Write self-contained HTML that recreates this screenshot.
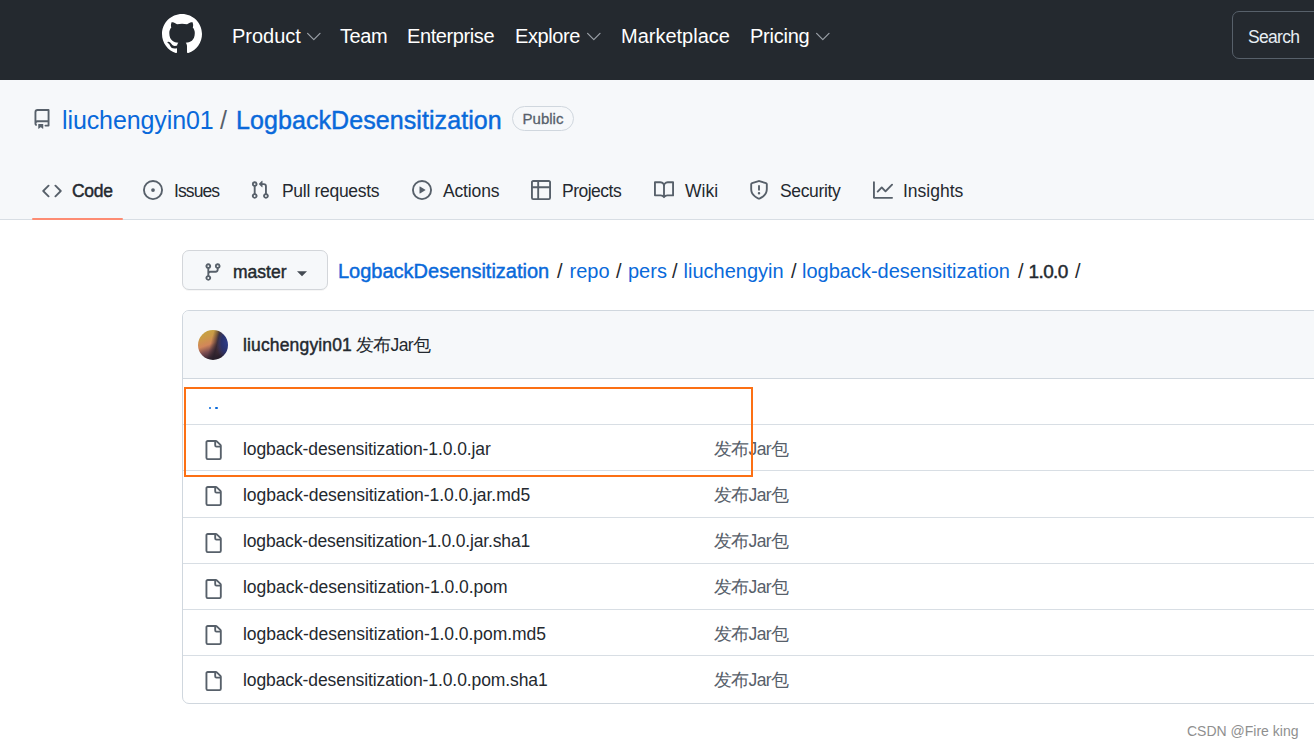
<!DOCTYPE html>
<html><head><meta charset="utf-8">
<style>
*{box-sizing:border-box;margin:0;padding:0}
html,body{width:1314px;height:748px;overflow:hidden;background:#fff;font-family:"Liberation Sans",sans-serif;color:#24292f;position:relative}
.abs{position:absolute;white-space:nowrap}
.sb{-webkit-text-stroke:0.45px currentColor}
#hdr{position:absolute;left:0;top:0;width:1314px;height:80px;background:#24292f}
.nav{position:absolute;top:22px;font-size:20px;line-height:28px;color:#fff;letter-spacing:-0.4px;white-space:nowrap}
.chev{position:absolute;top:32px}
#sub{position:absolute;left:0;top:80px;width:1314px;height:140px;background:#f6f8fa;border-bottom:1px solid #d8dee4}
.tab{position:absolute;top:179px;font-size:17.5px;line-height:24px;color:#24292f;white-space:nowrap}
.ti{position:absolute;top:180px;fill:#57606a}
.lnk{color:#0969da}
.dk{color:#24292f}
#box{position:absolute;left:182px;top:310px;width:1200px;height:394px;border:1px solid #d0d7de;border-radius:7px;overflow:hidden;background:#fff}
#boxh{position:absolute;left:0;top:0;width:100%;height:68px;background:#f6f8fa;border-bottom:1px solid #d0d7de}
.row{position:absolute;left:183px;width:1131px;height:46.25px;border-top:1px solid #d8dee4}
.fi{position:absolute;left:20px;top:15px;fill:#57606a}
.fn{position:absolute;left:60px;top:11.5px;font-size:17.5px;line-height:24px;color:#24292f;white-space:nowrap;letter-spacing:-0.12px}
.cm{position:absolute;left:531px;top:11.5px;font-size:17.5px;line-height:24px;color:#57606a;white-space:nowrap;letter-spacing:-0.7px}
</style></head><body>
<div id="hdr">
  <svg class="abs" style="left:162px;top:14px" width="40" height="40" viewBox="0 0 16 16"><path fill-rule="evenodd" fill="#fff" d="M8 0C3.58 0 0 3.58 0 8c0 3.54 2.29 6.53 5.47 7.59.4.07.55-.17.55-.38 0-.19-.01-.82-.01-1.49-2.01.37-2.53-.49-2.69-.94-.09-.23-.48-.94-.82-1.13-.28-.15-.68-.52-.01-.53.63-.01 1.08.58 1.23.82.72 1.21 1.87.87 2.33.66.07-.52.28-.87.51-1.07-1.78-.2-3.64-.89-3.64-3.95 0-.87.31-1.59.82-2.15-.08-.2-.36-1.02.08-2.12 0 0 .67-.21 2.2.82.64-.18 1.32-.27 2-.27.68 0 1.36.09 2 .27 1.53-1.04 2.2-.82 2.2-.82.44 1.1.16 1.92.08 2.12.51.56.82 1.27.82 2.15 0 3.07-1.87 3.75-3.65 3.95.29.25.54.73.54 1.48 0 1.07-.01 1.93-.01 2.2 0 .21.15.46.55.38A8.013 8.013 0 0016 8c0-4.42-3.58-8-8-8z"/></svg>
  <span id="n1" class="nav" style="left:232px;letter-spacing:0">Product</span>
  <svg class="chev" style="left:307px" width="14" height="9" viewBox="0 0 14 9"><path d="M0.6 1.4l6.2 6.2 6.2-6.2" fill="none" stroke="#9ba1a8" stroke-width="1.2" stroke-linecap="round" stroke-linejoin="round"/></svg>
  <span id="n2" class="nav" style="left:340px">Team</span>
  <span id="n3" class="nav" style="left:407px">Enterprise</span>
  <span id="n4" class="nav" style="left:515px">Explore</span>
  <svg class="chev" style="left:587px" width="14" height="9" viewBox="0 0 14 9"><path d="M0.6 1.4l6.2 6.2 6.2-6.2" fill="none" stroke="#9ba1a8" stroke-width="1.2" stroke-linecap="round" stroke-linejoin="round"/></svg>
  <span id="n5" class="nav" style="left:621px;letter-spacing:0">Marketplace</span>
  <span id="n6" class="nav" style="left:750px;letter-spacing:-0.25px">Pricing</span>
  <svg class="chev" style="left:816px" width="14" height="9" viewBox="0 0 14 9"><path d="M0.6 1.4l6.2 6.2 6.2-6.2" fill="none" stroke="#9ba1a8" stroke-width="1.2" stroke-linecap="round" stroke-linejoin="round"/></svg>
  <div class="abs" style="left:1232px;top:11px;width:120px;height:48px;border:1px solid #57606a;border-radius:7px"></div>
  <span id="srch" class="abs" style="left:1248px;top:23px;font-size:17.5px;line-height:28px;color:#e6edf3;letter-spacing:-0.7px">Search</span>
</div>

<div id="sub"></div>
<svg class="abs" style="left:32px;top:109px" width="20" height="20" viewBox="0 0 16 16"><path fill-rule="evenodd" fill="#57606a" d="M2 2.5A2.5 2.5 0 014.5 0h8.75a.75.75 0 01.75.75v12.5a.75.75 0 01-.75.75h-2.5a.75.75 0 110-1.5h1.75v-2h-8a1 1 0 00-.714 1.7.75.75 0 01-1.072 1.05A2.495 2.495 0 012 11.5v-9zm10.5-1V9h-8c-.356 0-.694.074-1 .208V2.5a1 1 0 011-1h8zM5 12.25v3.25a.25.25 0 00.4.2l1.45-1.087a.25.25 0 01.3 0L8.6 15.7a.25.25 0 00.4-.2v-3.25a.25.25 0 00-.25-.25h-3.5a.25.25 0 00-.25.25z"/></svg>
<span id="own" class="abs lnk" style="left:62px;top:103px;font-size:25px;line-height:34px;letter-spacing:-0.1px">liuchengyin01</span>
<span id="slash" class="abs" style="left:220px;top:103px;font-size:25px;line-height:34px;color:#57606a">/</span>
<span id="repo" class="abs lnk sb" style="left:236px;top:103px;font-size:25px;line-height:34px;letter-spacing:0.08px">LogbackDesensitization</span>
<span id="pub" class="abs sb" style="left:512px;top:106px;width:62px;height:25px;text-align:center;border:1px solid #d0d7de;border-radius:13px;font-size:15px;line-height:23px;color:#57606a;-webkit-text-stroke:0.3px #57606a">Public</span>

<svg class="ti" style="left:42px;top:180.5px" width="20" height="20" viewBox="0 0 16 16"><path fill-rule="evenodd" d="M4.72 3.22a.75.75 0 011.06 1.06L2.06 8l3.72 3.72a.75.75 0 11-1.06 1.06L.47 8.53a.75.75 0 010-1.06l4.25-4.25zm6.56 0a.75.75 0 10-1.06 1.06L13.94 8l-3.72 3.72a.75.75 0 101.06 1.06l4.25-4.25a.75.75 0 000-1.06l-4.25-4.25z"/></svg>
<span id="t1" class="tab sb" style="left:72px;letter-spacing:-0.3px">Code</span>
<div class="abs" style="left:31.7px;top:217.5px;width:91.8px;height:2.5px;border-radius:1.5px;background:#fd8c73"></div>
<svg class="ti" style="left:143px" width="20" height="20" viewBox="0 0 16 16"><path fill-rule="evenodd" d="M8 9.5a1.5 1.5 0 100-3 1.5 1.5 0 000 3z"/><path fill-rule="evenodd" d="M8 0a8 8 0 100 16A8 8 0 008 0zM1.5 8a6.5 6.5 0 1113 0 6.5 6.5 0 01-13 0z"/></svg>
<span id="t2" class="tab" style="left:174px;letter-spacing:-0.9px">Issues</span>
<svg class="ti" style="left:250px" width="20" height="20" viewBox="0 0 16 16"><path fill-rule="evenodd" d="M7.177 3.073L9.573.677A.25.25 0 0110 .854v4.792a.25.25 0 01-.427.177L7.177 3.427a.25.25 0 010-.354zM3.75 2.5a.75.75 0 100 1.5.75.75 0 000-1.5zm-2.25.75a2.25 2.25 0 113 2.122v5.256a2.251 2.251 0 11-1.5 0V5.372A2.25 2.25 0 011.5 3.25zM11 2.5h-1V4h1a1 1 0 011 1v5.628a2.251 2.251 0 101.5 0V5A2.5 2.5 0 0011 2.5zm1 10.25a.75.75 0 111.5 0 .75.75 0 01-1.5 0zM3.75 12a.75.75 0 100 1.5.75.75 0 000-1.5z"/></svg>
<span id="t3" class="tab" style="left:282px;letter-spacing:-0.3px">Pull requests</span>
<svg class="ti" style="left:412px" width="20" height="20" viewBox="0 0 16 16"><path fill-rule="evenodd" d="M1.5 8a6.5 6.5 0 1113 0 6.5 6.5 0 01-13 0zM8 0a8 8 0 100 16A8 8 0 008 0zM6.379 5.227A.25.25 0 006 5.442v5.117a.25.25 0 00.379.214l4.264-2.559a.25.25 0 000-.428L6.379 5.227z"/></svg>
<span id="t4" class="tab" style="left:443px;letter-spacing:-0.15px">Actions</span>
<svg class="ti" style="left:531px" width="20" height="20" viewBox="0 0 16 16"><path fill-rule="evenodd" d="M0 1.75C0 .784.784 0 1.75 0h12.5C15.216 0 16 .784 16 1.75v12.5A1.75 1.75 0 0114.25 16H1.75A1.75 1.75 0 010 14.25V1.75zM1.5 6.5v7.75c0 .138.112.25.25.25H5v-8H1.5zM5 5H1.5V1.75a.25.25 0 01.25-.25H5V5zm1.5 1.5v8h7.75a.25.25 0 00.25-.25V6.5h-8zm8-1.5h-8V1.5h7.75a.25.25 0 01.25.25V5z"/></svg>
<span id="t5" class="tab" style="left:562px;letter-spacing:-0.5px">Projects</span>
<svg class="ti" style="left:654px" width="20" height="20" viewBox="0 0 16 16"><path fill-rule="evenodd" d="M0 1.75A.75.75 0 01.75 1h4.253c1.227 0 2.317.59 3 1.501A3.744 3.744 0 0111.006 1h4.245a.75.75 0 01.75.75v10.5a.75.75 0 01-.75.75h-4.507a2.25 2.25 0 00-1.591.659l-.622.621a.75.75 0 01-1.06 0l-.622-.621A2.25 2.25 0 005.258 13H.75a.75.75 0 01-.75-.75V1.75zm8.755 3a2.25 2.25 0 012.25-2.25H14.5v9h-3.757c-.71 0-1.4.201-1.992.572l.004-7.322zm-1.504 7.324l.004-5.073-.002-2.253A2.25 2.25 0 005.003 2.5H1.5v9h3.757a3.75 3.75 0 011.994.574z"/></svg>
<span id="t6" class="tab" style="left:685px">Wiki</span>
<svg class="ti" style="left:749px" width="20" height="20" viewBox="0 0 16 16"><path fill-rule="evenodd" d="M7.467.133a1.75 1.75 0 011.066 0l5.25 1.68A1.75 1.75 0 0115 3.48V7c0 1.566-.32 3.182-1.303 4.682-.983 1.498-2.585 2.813-5.032 3.855a1.7 1.7 0 01-1.33 0c-2.447-1.042-4.049-2.357-5.032-3.855C1.32 10.182 1 8.566 1 7V3.48a1.75 1.75 0 011.217-1.667l5.25-1.68zm.61 1.429a.25.25 0 00-.153 0l-5.25 1.68a.25.25 0 00-.174.238V7c0 1.358.275 2.666 1.057 3.86.784 1.194 2.121 2.34 4.366 3.297a.2.2 0 00.154 0c2.245-.956 3.582-2.104 4.366-3.298C13.225 9.666 13.5 8.36 13.5 7V3.48a.25.25 0 00-.174-.237l-5.25-1.68zM9 10.5a1 1 0 11-2 0 1 1 0 012 0zm-.25-5.75a.75.75 0 10-1.5 0v3a.75.75 0 001.5 0v-3z"/></svg>
<span id="t7" class="tab" style="left:780px;letter-spacing:-0.35px">Security</span>
<svg class="ti" style="left:873px" width="20" height="20" viewBox="0 0 16 16"><path fill-rule="evenodd" d="M1.5 1.75a.75.75 0 00-1.5 0v12.5c0 .414.336.75.75.75h14.5a.75.75 0 000-1.5H1.5V1.75zm14.28 2.53a.75.75 0 00-1.06-1.06L10 7.94 7.53 5.47a.75.75 0 00-1.06 0L3.22 8.72a.75.75 0 001.06 1.06L7 7.06l2.47 2.47a.75.75 0 001.06 0l5.25-5.25z"/></svg>
<span id="t8" class="tab" style="left:903px">Insights</span>

<!-- branch + breadcrumb -->
<div class="abs" style="left:182px;top:250px;width:146px;height:40px;background:#f6f8fa;border:1px solid #d3d6da;border-radius:7px;box-shadow:0 1px 0 rgba(27,31,36,0.04)"></div>
<svg class="abs" style="left:203px;top:262px" width="20" height="20" viewBox="0 0 16 16"><path fill-rule="evenodd" fill="#57606a" d="M11.75 2.5a.75.75 0 100 1.5.75.75 0 000-1.5zm-2.25.75a2.25 2.25 0 113 2.122V6A2.5 2.5 0 0110 8.5H6a1 1 0 00-1 1v1.128a2.251 2.251 0 11-1.5 0V5.372a2.25 2.25 0 111.5 0v1.836A2.492 2.492 0 016 7h4a1 1 0 001-1v-.628A2.25 2.25 0 019.5 3.25zM4.25 12a.75.75 0 100 1.5.75.75 0 000-1.5zM3.5 3.25a.75.75 0 111.5 0 .75.75 0 01-1.5 0z"/></svg>
<span id="mst" class="abs sb" style="left:233px;top:259.5px;font-size:17.5px;line-height:24px;color:#24292f">master</span>
<svg class="abs" style="left:297px;top:271px" width="10" height="6" viewBox="0 0 10 6"><path d="M0 0.2h10L5 5.3z" fill="#444b53"/></svg>

<span id="c1" class="abs lnk sb" style="left:338px;top:257px;font-size:20px;line-height:28px">LogbackDesensitization</span>
<span class="abs dk" style="left:557px;top:257px;font-size:20px;line-height:28px">/</span>
<span id="c2" class="abs lnk" style="left:569.5px;top:257px;font-size:20px;line-height:28px">repo</span>
<span class="abs dk" style="left:616px;top:257px;font-size:20px;line-height:28px">/</span>
<span id="c3" class="abs lnk" style="left:628px;top:257px;font-size:20px;line-height:28px">pers</span>
<span class="abs dk" style="left:672px;top:257px;font-size:20px;line-height:28px">/</span>
<span id="c4" class="abs lnk" style="left:683.5px;top:257px;font-size:20px;line-height:28px">liuchengyin</span>
<span class="abs dk" style="left:791px;top:257px;font-size:20px;line-height:28px">/</span>
<span id="c5" class="abs lnk" style="left:802px;top:257px;font-size:20px;line-height:28px">logback-desensitization</span>
<span class="abs dk" style="left:1018px;top:257px;font-size:20px;line-height:28px">/</span>
<span id="c6" class="abs dk sb" style="left:1028.5px;top:257.5px;font-size:19px;line-height:28px;letter-spacing:-0.6px">1.0.0</span>
<span class="abs dk" style="left:1075px;top:257px;font-size:20px;line-height:28px">/</span>

<!-- file box -->
<div id="box"><div id="boxh"></div></div>
<div class="abs" style="left:198px;top:330px;width:30px;height:30px;border-radius:50%;background:radial-gradient(ellipse 38% 60% at 98% 42%,#2c3c88 0%,#29316a 55%,rgba(41,49,106,0) 100%),linear-gradient(105deg,rgba(42,32,42,0) 42%,rgba(42,32,42,0.85) 60%,rgba(42,32,42,0.3) 78%,rgba(42,32,42,0) 90%),linear-gradient(160deg,#c2a83e 0%,#cc9a48 25%,#d2865a 45%,#7a4c50 62%,#2e2230 82%,#1a1620 100%)"></div>
<span id="au" class="abs sb" style="left:243px;top:333px;font-size:17.5px;line-height:24px;color:#24292f;letter-spacing:0.15px">liuchengyin01</span>
<span id="msg" class="abs" style="left:356px;top:333px;font-size:17.5px;line-height:24px;color:#24292f;letter-spacing:-0.7px">发布Jar包</span>

<div class="abs" style="left:208.5px;top:407px;width:2.3px;height:2.3px;border-radius:40%;background:#0969da"></div>
<div class="abs" style="left:215.4px;top:407px;width:2.3px;height:2.3px;border-radius:40%;background:#0969da"></div>

<div class="row" style="top:424.00px"><svg class="fi" width="20" height="20" viewBox="0 0 16 16"><path fill-rule="evenodd" d="M2 1.75C2 .784 2.784 0 3.75 0h6.586c.464 0 .909.184 1.237.513l2.914 2.914c.329.328.513.773.513 1.237v9.586A1.75 1.75 0 0113.25 16h-9.5A1.75 1.75 0 012 14.25V1.75zm1.75-.25a.25.25 0 00-.25.25v12.5c0 .138.112.25.25.25h9.5a.25.25 0 00.25-.25V6h-2.75A1.75 1.75 0 019 4.25V1.5H3.75zm6.75.062V4.25c0 .138.112.25.25.25h2.688a.252.252 0 00-.011-.013l-2.914-2.914a.246.246 0 00-.013-.011z"/></svg><span class="fn" style="letter-spacing:-0.1px">logback-desensitization-1.0.0.jar</span><span class="cm">发布Jar包</span></div>
<div class="row" style="top:470.25px"><svg class="fi" width="20" height="20" viewBox="0 0 16 16"><path fill-rule="evenodd" d="M2 1.75C2 .784 2.784 0 3.75 0h6.586c.464 0 .909.184 1.237.513l2.914 2.914c.329.328.513.773.513 1.237v9.586A1.75 1.75 0 0113.25 16h-9.5A1.75 1.75 0 012 14.25V1.75zm1.75-.25a.25.25 0 00-.25.25v12.5c0 .138.112.25.25.25h9.5a.25.25 0 00.25-.25V6h-2.75A1.75 1.75 0 019 4.25V1.5H3.75zm6.75.062V4.25c0 .138.112.25.25.25h2.688a.252.252 0 00-.011-.013l-2.914-2.914a.246.246 0 00-.013-.011z"/></svg><span class="fn" style="letter-spacing:-0.05px">logback-desensitization-1.0.0.jar.md5</span><span class="cm">发布Jar包</span></div>
<div class="row" style="top:516.50px"><svg class="fi" width="20" height="20" viewBox="0 0 16 16"><path fill-rule="evenodd" d="M2 1.75C2 .784 2.784 0 3.75 0h6.586c.464 0 .909.184 1.237.513l2.914 2.914c.329.328.513.773.513 1.237v9.586A1.75 1.75 0 0113.25 16h-9.5A1.75 1.75 0 012 14.25V1.75zm1.75-.25a.25.25 0 00-.25.25v12.5c0 .138.112.25.25.25h9.5a.25.25 0 00.25-.25V6h-2.75A1.75 1.75 0 019 4.25V1.5H3.75zm6.75.062V4.25c0 .138.112.25.25.25h2.688a.252.252 0 00-.011-.013l-2.914-2.914a.246.246 0 00-.013-.011z"/></svg><span class="fn" style="letter-spacing:-0.15px">logback-desensitization-1.0.0.jar.sha1</span><span class="cm">发布Jar包</span></div>
<div class="row" style="top:562.75px"><svg class="fi" width="20" height="20" viewBox="0 0 16 16"><path fill-rule="evenodd" d="M2 1.75C2 .784 2.784 0 3.75 0h6.586c.464 0 .909.184 1.237.513l2.914 2.914c.329.328.513.773.513 1.237v9.586A1.75 1.75 0 0113.25 16h-9.5A1.75 1.75 0 012 14.25V1.75zm1.75-.25a.25.25 0 00-.25.25v12.5c0 .138.112.25.25.25h9.5a.25.25 0 00.25-.25V6h-2.75A1.75 1.75 0 019 4.25V1.5H3.75zm6.75.062V4.25c0 .138.112.25.25.25h2.688a.252.252 0 00-.011-.013l-2.914-2.914a.246.246 0 00-.013-.011z"/></svg><span class="fn" style="letter-spacing:-0.03px">logback-desensitization-1.0.0.pom</span><span class="cm">发布Jar包</span></div>
<div class="row" style="top:609.00px"><svg class="fi" width="20" height="20" viewBox="0 0 16 16"><path fill-rule="evenodd" d="M2 1.75C2 .784 2.784 0 3.75 0h6.586c.464 0 .909.184 1.237.513l2.914 2.914c.329.328.513.773.513 1.237v9.586A1.75 1.75 0 0113.25 16h-9.5A1.75 1.75 0 012 14.25V1.75zm1.75-.25a.25.25 0 00-.25.25v12.5c0 .138.112.25.25.25h9.5a.25.25 0 00.25-.25V6h-2.75A1.75 1.75 0 019 4.25V1.5H3.75zm6.75.062V4.25c0 .138.112.25.25.25h2.688a.252.252 0 00-.011-.013l-2.914-2.914a.246.246 0 00-.013-.011z"/></svg><span class="fn" style="letter-spacing:-0.04px">logback-desensitization-1.0.0.pom.md5</span><span class="cm">发布Jar包</span></div>
<div class="row" style="top:655.25px"><svg class="fi" width="20" height="20" viewBox="0 0 16 16"><path fill-rule="evenodd" d="M2 1.75C2 .784 2.784 0 3.75 0h6.586c.464 0 .909.184 1.237.513l2.914 2.914c.329.328.513.773.513 1.237v9.586A1.75 1.75 0 0113.25 16h-9.5A1.75 1.75 0 012 14.25V1.75zm1.75-.25a.25.25 0 00-.25.25v12.5c0 .138.112.25.25.25h9.5a.25.25 0 00.25-.25V6h-2.75A1.75 1.75 0 019 4.25V1.5H3.75zm6.75.062V4.25c0 .138.112.25.25.25h2.688a.252.252 0 00-.011-.013l-2.914-2.914a.246.246 0 00-.013-.011z"/></svg><span class="fn" style="letter-spacing:-0.1px">logback-desensitization-1.0.0.pom.sha1</span><span class="cm">发布Jar包</span></div>

<span class="abs" style="left:1187px;top:722px;font-size:14px;line-height:18px;color:#8f8f8f">CSDN @Fire king</span>

<div class="abs" style="left:184px;top:387px;width:569px;height:90px;border:2px solid #fc7014"></div>
</body></html>
